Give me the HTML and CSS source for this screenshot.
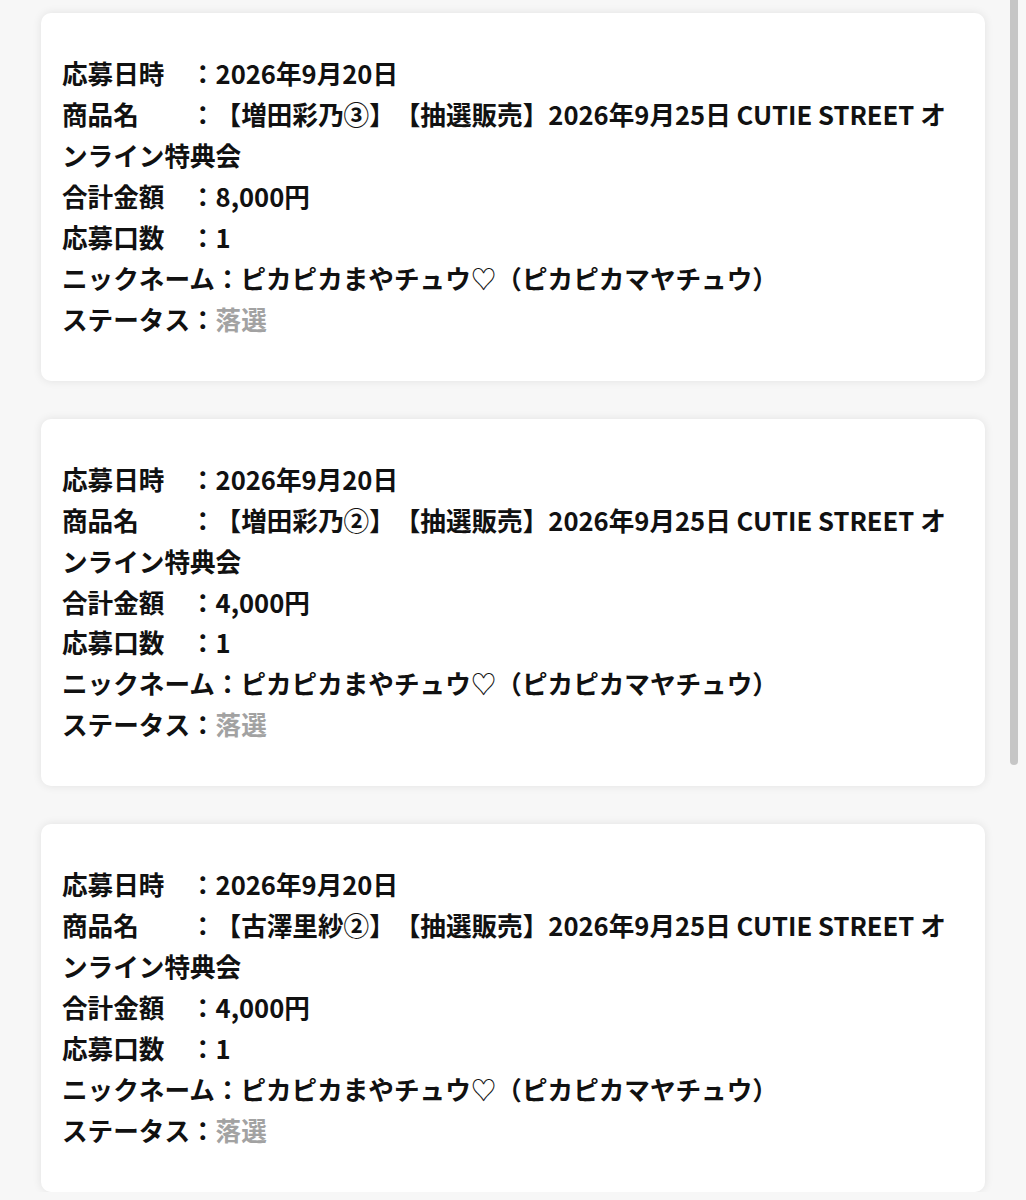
FILE: index.html
```html
<!DOCTYPE html>
<html lang="ja">
<head>
<meta charset="utf-8">
<title>応募履歴</title>
<link rel="stylesheet" href="styles.css">
</head>
<body>
<div class="page">
  <div class="card">
    <p class="row">応募日時　：2026年9月20日</p>
    <p class="row">商品名　　：【増田彩乃③】【抽選販売】2026年9月25日 CUTIE STREET オンライン特典会</p>
    <p class="row">合計金額　：8,000円</p>
    <p class="row">応募口数　：1</p>
    <p class="row">ニックネーム：ピカピカまやチュウ<span class="heart">♡</span>（ピカピカマヤチュウ）</p>
    <p class="row">ステータス：<span class="status">落選</span></p>
  </div>
  <div class="card">
    <p class="row">応募日時　：2026年9月20日</p>
    <p class="row">商品名　　：【増田彩乃②】【抽選販売】2026年9月25日 CUTIE STREET オンライン特典会</p>
    <p class="row">合計金額　：4,000円</p>
    <p class="row">応募口数　：1</p>
    <p class="row">ニックネーム：ピカピカまやチュウ<span class="heart">♡</span>（ピカピカマヤチュウ）</p>
    <p class="row">ステータス：<span class="status">落選</span></p>
  </div>
  <div class="card">
    <p class="row">応募日時　：2026年9月20日</p>
    <p class="row">商品名　　：【古澤里紗②】【抽選販売】2026年9月25日 CUTIE STREET オンライン特典会</p>
    <p class="row">合計金額　：4,000円</p>
    <p class="row">応募口数　：1</p>
    <p class="row">ニックネーム：ピカピカまやチュウ<span class="heart">♡</span>（ピカピカマヤチュウ）</p>
    <p class="row">ステータス：<span class="status">落選</span></p>
  </div>
</div>
<div class="scrollbar"></div>
</body>
</html>
```
FILE: styles.css
```css
html, body {
  margin: 0;
  padding: 0;
  background: #f7f7f7;
}
body {
  font-family: "Noto Sans CJK JP", "Noto Sans", sans-serif;
  color: #111;
  overflow: hidden;
}
.page {
  display: flex;
  flex-direction: column;
  gap: 38px;
  padding: 13px 41px 0 41px;
}
.card {
  background: #fff;
  border-radius: 10px;
  box-shadow: 0 0 10px rgba(0, 0, 0, 0.09);
  padding: 40px 21px 41px 21px;
}
.row {
  margin: 0;
  font-size: 25.6px;
  line-height: 40.96px;
  font-weight: 700;
  text-spacing-trim: space-all;
}
.heart {
  font-weight: 400;
}
.status {
  color: #a2a2a2;
}
.scrollbar {
  position: absolute;
  top: 0;
  left: 1010px;
  width: 8px;
  height: 765px;
  background: #c6c6c6;
  border-radius: 0 0 4px 4px;
}
```
